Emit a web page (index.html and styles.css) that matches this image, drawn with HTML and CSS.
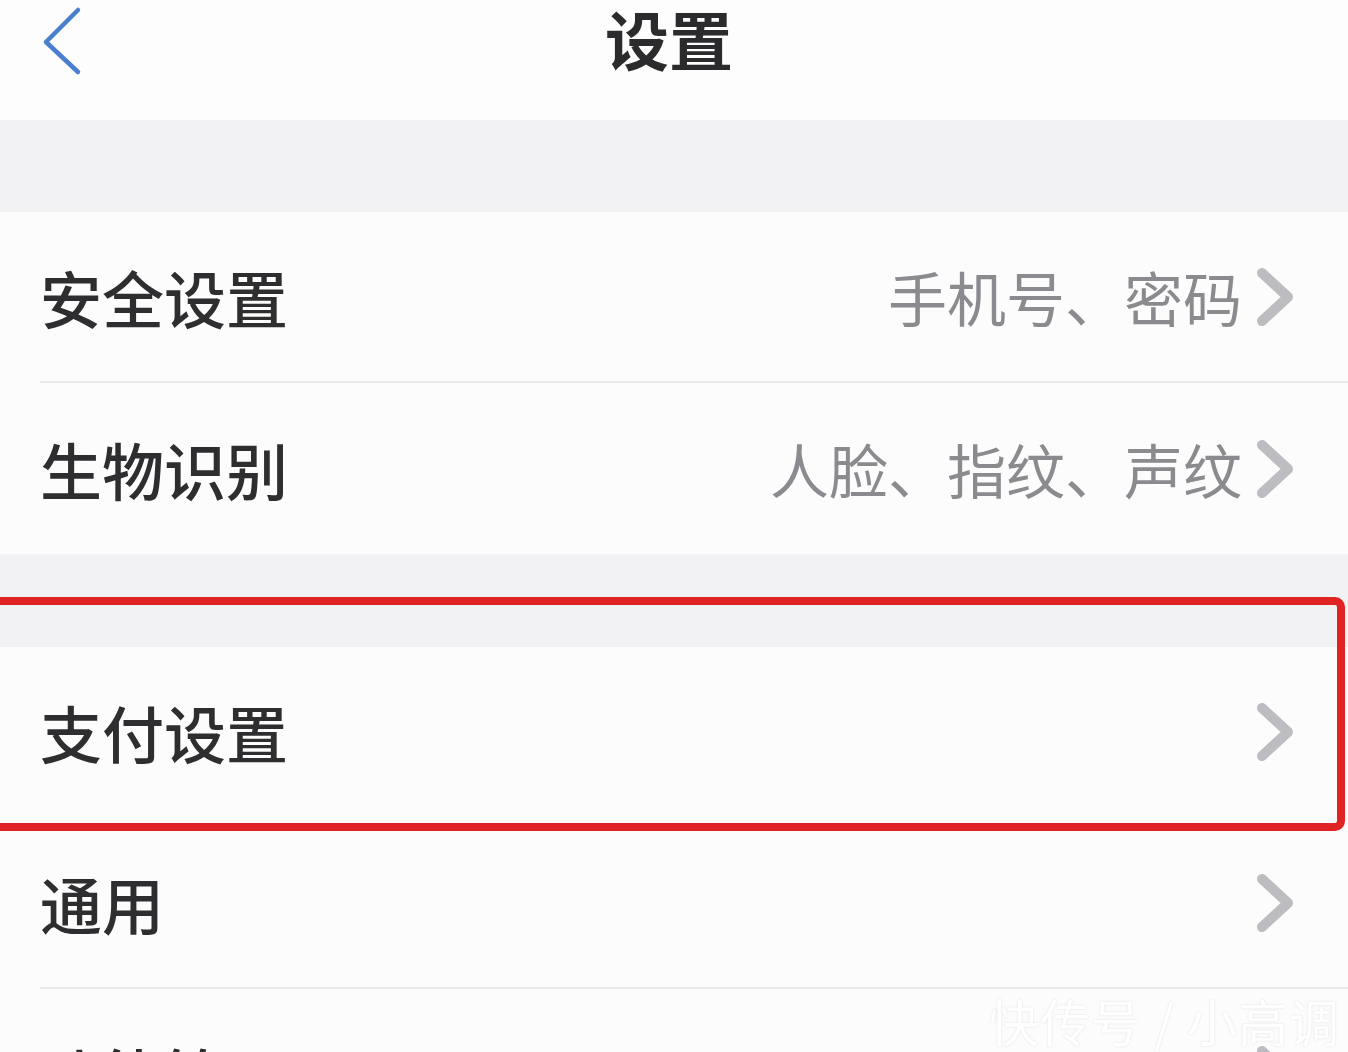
FILE: index.html
```html
<!DOCTYPE html>
<html lang="zh-CN">
<head>
  <meta charset="UTF-8" />
  <meta name="viewport" content="width=device-width, initial-scale=1.0"/>
  <title>设置</title>
  <link rel="stylesheet" href="styles.css">
</head>
<body>

  <header class="nav-bar">
    <span class="back">
      <svg width="44" height="70" viewBox="0 0 44 70">
        <polyline points="38,4 6,36 38,66" fill="none" stroke="#4a7fd0" stroke-width="4.5" stroke-linecap="round" stroke-linejoin="round"/>
      </svg>
    </span>
    <h1>设置</h1>
  </header>

  <div class="gap"></div>

  <section class="group">
    <div class="row">
      <div class="row-body">
        <span class="label">安全设置</span>
        <span class="value">手机号、密码</span>
        <svg class="chevron" width="42" height="64" viewBox="0 0 42 64"><polyline points="8,8 34,32 8,56" /></svg>
      </div>
    </div>
    <div class="row">
      <div class="row-body">
        <span class="label">生物识别</span>
        <span class="value">人脸、指纹、声纹</span>
        <svg class="chevron" width="42" height="64" viewBox="0 0 42 64"><polyline points="8,8 34,32 8,56" /></svg>
      </div>
    </div>
  </section>

  <div class="gap gap-lg"></div>

  <section class="group">
    <div class="row">
      <div class="row-body no-line">
        <span class="label">支付设置</span>
        <svg class="chevron" width="42" height="64" viewBox="0 0 42 64"><polyline points="8,8 34,32 8,56" /></svg>
      </div>
    </div>
    <div class="row">
      <div class="row-body">
        <span class="label">通用</span>
        <svg class="chevron" width="42" height="64" viewBox="0 0 42 64"><polyline points="8,8 34,32 8,56" /></svg>
      </div>
    </div>
    <div class="row">
      <div class="row-body">
        <span class="label">功能管理</span>
        <svg class="chevron" width="42" height="64" viewBox="0 0 42 64"><polyline points="8,8 34,32 8,56" /></svg>
      </div>
    </div>
  </section>

  <div class="highlight"></div>
  <div class="watermark">快传号 / 小高调</div>

</body>
</html>
```

FILE: styles.css
```css
html, body {
  height: 100%;
  overflow: hidden;
}

body {
  margin: 0;
  position: relative;
  font-family: "Noto Sans CJK SC", "Noto Sans", sans-serif;
  background-color: #fcfcfd;
  color: #2e2e30;
}

.nav-bar {
  height: 120px;
  background-color: #fdfdfe;
  display: flex;
  align-items: flex-start;
  justify-content: center;
  position: relative;
}

.nav-bar h1 {
  margin: 0 10px 0 0;
  font-size: 64px;
  line-height: 74px;
  font-weight: 700;
  color: #2b2b2d;
}

.back {
  position: absolute;
  left: 40px;
  top: 6px;
}

.gap {
  height: 92px;
  background-color: #f2f2f4;
}

.gap-lg {
  height: 93px;
}

.group {
  background-color: #fcfcfd;
}

.row {
  padding-left: 40px;
}

.row-body {
  height: 169px;
  display: flex;
  align-items: center;
  padding-right: 52px;
  border-bottom: 2px solid #e9e9eb;
}

.row-body.no-line {
  border-bottom-color: transparent;
}

.group .row:last-child .row-body {
  border-bottom: none;
  height: 171px;
}

.label {
  font-size: 62px;
  font-weight: 500;
  color: #2e2e30;
  flex: 1;
}

.value {
  font-size: 59px;
  color: #8b8b8f;
  margin-right: 12px;
}

.chevron polyline {
  fill: none;
  stroke: #bdbdc1;
  stroke-width: 10;
  stroke-linecap: round;
  stroke-linejoin: round;
}

.highlight {
  position: absolute;
  left: -12px;
  top: 597px;
  width: 1357px;
  height: 234px;
  box-sizing: border-box;
  border: 8px solid #e02424;
  border-radius: 10px;
}

.watermark {
  position: absolute;
  right: 8px;
  top: 984px;
  font-size: 50px;
  color: #ffffff;
  text-shadow: 0 0 2px rgba(200, 200, 205, 0.6);
  letter-spacing: 1px;
}
```
